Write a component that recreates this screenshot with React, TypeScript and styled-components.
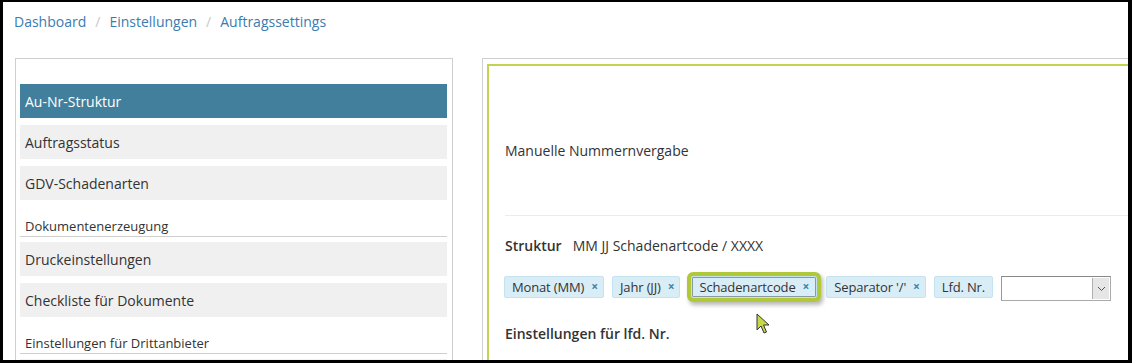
import styled, { createGlobalStyle } from 'styled-components';

const Global = createGlobalStyle`
  body {
    margin: 0;
    background: #fff;
    font-family: "Open Sans", "Noto Sans", sans-serif;
    color: #333;
  }
`;

const Frame = styled.div`
  position: relative;
  box-sizing: border-box;
  width: 1132px;
  height: 363px;
  border-style: solid;
  border-color: #000;
  border-width: 2px 4px 3px 3px;
  overflow: hidden;
  background: #fff;
`;

const Crumbs = styled.nav`
  display: flex;
  align-items: center;
  gap: 9px;
  padding: 10px 11px 0;
  height: 20px;
  font-size: 14px;
  line-height: 20px;
`;

const Crumb = styled.a`
  color: #3a7cb0;
  text-decoration: none;
`;

const Slash = styled.span`
  color: #c8c8c8;
`;

const Columns = styled.div`
  display: flex;
  gap: 29px;
  margin-top: 26px;
  padding-left: 12px;
`;

const SideNav = styled.aside`
  flex: 0 0 auto;
  box-sizing: border-box;
  width: 438px;
  height: 320px;
  border: 1px solid #cfcfcf;
  padding: 25px 5px 0 4px;
`;

const NavItem = styled.div<{ $active?: boolean }>`
  height: 34px;
  margin-bottom: 7px;
  padding-left: 5px;
  display: flex;
  align-items: center;
  font-size: 14px;
  background: ${(p) => (p.$active ? '#427f9c' : '#f0f0f0')};
  color: ${(p) => (p.$active ? '#fff' : '#333')};
`;

const NavHeader = styled.div`
  box-sizing: border-box;
  height: 30px;
  margin-bottom: 5px;
  padding: 0 0 1px 5px;
  display: flex;
  align-items: flex-end;
  font-size: 13px;
  line-height: 17px;
  border-bottom: 1px solid #cfcfcf;
`;

const Main = styled.section`
  flex: 0 0 auto;
  width: 760px;
  height: 320px;
  border: 1px solid #cfcfcf;
  padding: 5px 0 0 4px;
`;

const Panel = styled.div`
  height: 100%;
  border-top: 2px solid #c3d250;
  border-left: 2px solid #c3d250;
  padding: 75px 0 0 16px;
  font-size: 14px;
  line-height: 20px;
`;

const Rule = styled.div`
  margin: 54px 0 20px;
  border-top: 1px solid #ececec;
`;

const Line = styled.div`
  display: flex;
  gap: 11px;
`;

const Bold = styled.span`
  font-weight: 600;
`;

const Tags = styled.div`
  display: flex;
  align-items: flex-start;
  gap: 8px;
  margin: 20px 0 23px -1px;
  height: 25px;
`;

const Tag = styled.span<{ $marked?: boolean; $plain?: boolean }>`
  display: inline-flex;
  align-items: center;
  gap: 7px;
  height: 22px;
  box-sizing: border-box;
  padding: 0 ${(p) => (p.$plain ? 7 : 5)}px 0 7px;
  background: #d9edf7;
  border: 1px solid #c4e3ef;
  border-radius: 2px;
  font-size: 13px;
  letter-spacing: -0.15px;
  color: #333;
  ${(p) =>
    p.$marked &&
    `
    margin: 0 1px 0 3px;
    padding: 0 7px 0 7px;
    outline: 4px solid #b1c83a;
    box-shadow: inset 0 0 0 1px #8a9aa3, 2px 3px 4px 4px rgba(0,0,0,0.28);
  `}
`;

const Close = styled.span`
  color: #3a87ad;
  font-size: 12px;
  font-weight: 700;
`;

const Select = styled.div`
  display: flex;
  justify-content: flex-end;
  box-sizing: border-box;
  width: 110px;
  height: 25px;
  border: 1px solid #aaa;
  border-top-color: #888;
  border-left-color: #999;
  background: #fff;
  padding: 1px;
`;

const Arrow = styled.span`
  width: 17px;
  height: 21px;
  box-sizing: border-box;
  background: #e6e6e6;
  border-left: 1px solid #b0b0b0;
  display: flex;
  align-items: center;
  justify-content: center;
`;

const Cursor = styled.svg`
  position: absolute;
  left: 753px;
  top: 311px;
`;

export default function App() {
  return (
    <>
      <Global />
      <Frame>
        <Crumbs>
          <Crumb>Dashboard</Crumb>
          <Slash>/</Slash>
          <Crumb>Einstellungen</Crumb>
          <Slash>/</Slash>
          <Crumb>Auftragssettings</Crumb>
        </Crumbs>
        <Columns>
          <SideNav>
            <NavItem $active>Au-Nr-Struktur</NavItem>
            <NavItem>Auftragsstatus</NavItem>
            <NavItem>GDV-Schadenarten</NavItem>
            <NavHeader>Dokumentenerzeugung</NavHeader>
            <NavItem>Druckeinstellungen</NavItem>
            <NavItem>Checkliste für Dokumente</NavItem>
            <NavHeader>Einstellungen für Drittanbieter</NavHeader>
            <NavItem />
          </SideNav>
          <Main>
            <Panel>
              <div>Manuelle Nummernvergabe</div>
              <Rule />
              <Line>
                <Bold>Struktur</Bold>
                <span>MM JJ Schadenartcode / XXXX</span>
              </Line>
              <Tags>
                <Tag>
                  Monat (MM) <Close>×</Close>
                </Tag>
                <Tag>
                  Jahr (JJ) <Close>×</Close>
                </Tag>
                <Tag $marked>
                  Schadenartcode <Close>×</Close>
                </Tag>
                <Tag>
                  Separator '/' <Close>×</Close>
                </Tag>
                <Tag $plain>Lfd. Nr.</Tag>
                <Select>
                  <Arrow>
                    <svg width="9" height="6" viewBox="0 0 9 6">
                      <path d="M1 1l3.5 3.5L8 1" fill="none" stroke="#555" strokeWidth="1" />
                    </svg>
                  </Arrow>
                </Select>
              </Tags>
              <Bold>Einstellungen für lfd. Nr.</Bold>
            </Panel>
          </Main>
        </Columns>
        <Cursor width="14" height="22" viewBox="0 0 14 22">
          <path
            d="M1 1v16l4-4 3 7 2.5-1-3-7h5.5z"
            fill="#c6d84a"
            stroke="#333"
            strokeWidth="1"
            strokeLinejoin="round"
          />
        </Cursor>
      </Frame>
    </>
  );
}
